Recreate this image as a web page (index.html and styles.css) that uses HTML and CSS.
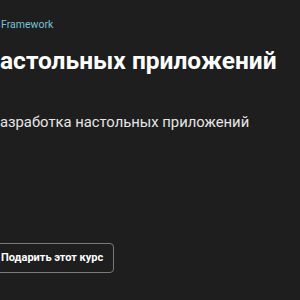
FILE: index.html
```html
<!DOCTYPE html>
<html>
	<head>
		<meta charset="UTF-8">
		<title>Курс</title>
		<link rel="stylesheet" href="styles.css">
	</head>
	<body>
		<div class="hero">
			<div class="crumb">Framework</div>
			<h1 class="title">астольных приложений</h1>
			<p class="desc">азработка настольных приложений</p>
			<div class="actions">
				<a class="gift" href="###">Подарить этот курс</a>
			</div>
		</div>
	</body>
</html>
```
FILE: styles.css
```css
*{
	margin: 0;
	padding: 0;
	box-sizing: border-box;
}
html, body{
	height: 100%;
}
body{
	background-color: #1e1e1e;
	font-family: Roboto, "Noto Sans", Arial, sans-serif;
	color: #fff;
	overflow: hidden;
}
.hero{
	padding-top: 17px;
}
.crumb{
	font-size: 10.5px;
	line-height: 16px;
	color: #74c3d5;
	padding-left: 1px;
}
.title{
	margin-top: 12px;
	font-size: 24.5px;
	line-height: 32px;
	font-weight: 700;
	white-space: nowrap;
}
.desc{
	margin-top: 34px;
	font-size: 14.8px;
	line-height: 22px;
	color: #e6e6e6;
	white-space: nowrap;
}
.actions{
	margin-top: 110px;
}
.gift{
	display: inline-block;
	height: 30px;
	line-height: 28px;
	padding: 0 10px 0 12px;
	margin-left: -12px;
	border: 1px solid #7a7a7a;
	border-radius: 4px;
	font-size: 11px;
	font-weight: 700;
	color: #fff;
	text-decoration: none;
}
```
